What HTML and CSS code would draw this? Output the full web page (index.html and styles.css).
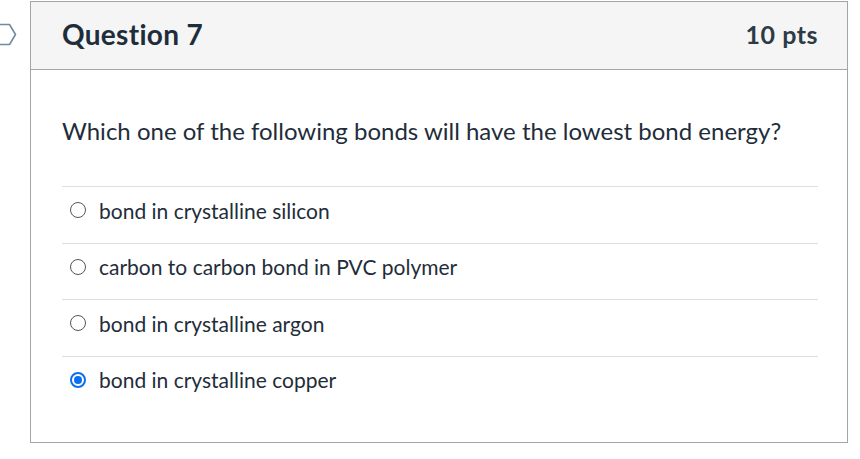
FILE: index.html
```html
<!DOCTYPE html>
<html>
<head>
<meta charset="utf-8">
<link rel="stylesheet" href="styles.css">
</head>
<body>
<div class="page">
  <div class="marker">
    <svg width="20" height="30" viewBox="0 0 20 30"><path d="M-4 1.5 H9.5 L15.5 11.5 L9.5 21.5 H-4 Z" fill="#fff" stroke="#6f8ca3" stroke-width="1.6" stroke-linejoin="round"/></svg>
  </div>
  <div class="card">
    <div class="header">
      <h2 class="title">Question 7</h2>
      <div class="pts">10 pts</div>
    </div>
    <div class="body">
      <p class="question">Which one of the following bonds will have the lowest bond energy?</p>
      <div class="answers">
        <label class="answer"><span class="radio"></span><span class="text">bond in crystalline silicon</span></label>
        <label class="answer"><span class="radio"></span><span class="text">carbon to carbon bond in PVC polymer</span></label>
        <label class="answer"><span class="radio"></span><span class="text">bond in crystalline argon</span></label>
        <label class="answer"><span class="radio checked"></span><span class="text">bond in crystalline copper</span></label>
      </div>
    </div>
  </div>
</div>
</body>
</html>
```
FILE: styles.css
```css
html, body { margin: 0; padding: 0; background: #fff; }
body { font-family: Lato, "Open Sans", sans-serif; color: #2d3b45; }
.page { display: flex; padding-top: 1px; }
.marker { width: 30px; padding-top: 22px; }
.marker svg { display: block; }
.card { width: 818px; border: 1px solid #a5a5a5; height: 442px; box-sizing: border-box; }
.header { height: 68px; box-sizing: border-box; background: #f5f5f5; border-bottom: 1px solid #a5a5a5; display: flex; align-items: center; justify-content: space-between; padding: 0 29px 3px 31px; }
.title { margin: 0; font-size: 28px; font-weight: 700; color: #1f2d3a; letter-spacing: 0.3px; }
.pts { font-size: 25px; font-weight: 700; color: #2d3b45; letter-spacing: 0.5px; }
.body { padding: 0 29px 0 31px; }
.question { margin: 0; padding-top: 47px; font-size: 24px; line-height: 28px; color: #1f2d3a; }
.answers { margin-top: 41px; }
.answer { display: flex; align-items: center; height: 56.5px; border-top: 1px solid #dedede; box-sizing: border-box; padding-left: 8px; padding-bottom: 9px; }
.radio { width: 16px; height: 16px; border: 1px solid #555; border-radius: 50%; box-sizing: border-box; margin-right: 13px; position: relative; flex: none; }
.radio.checked { border: 2px solid #0b6ff0; }
.radio.checked::after { content: ""; position: absolute; left: 2px; top: 2px; width: 8px; height: 8px; border-radius: 50%; background: #0b6ff0; }
.text { font-size: 21px; color: #1f2d3a; }
```
